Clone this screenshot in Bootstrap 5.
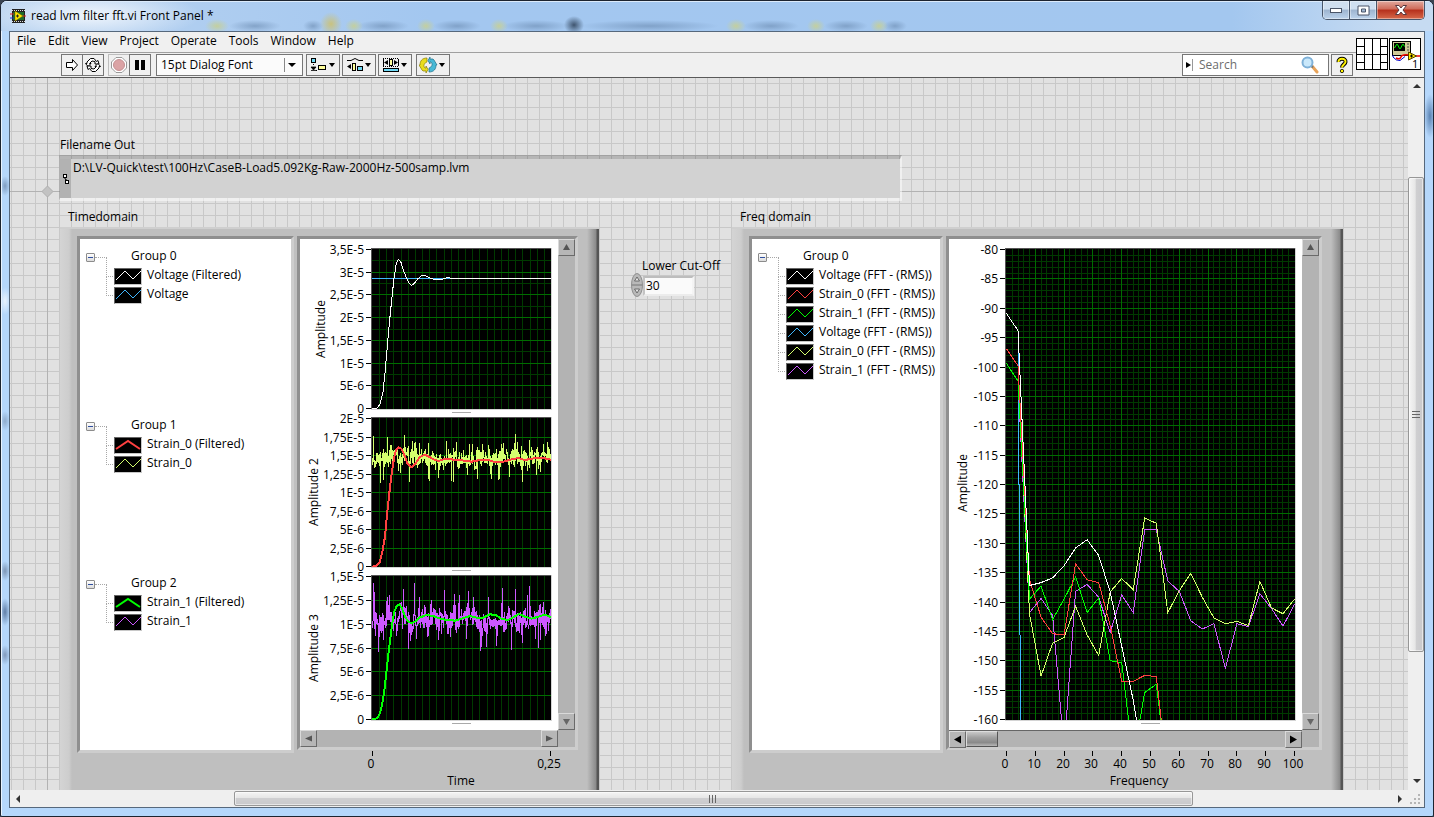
<!DOCTYPE html>
<html lang="en">
<head>
<meta charset="utf-8">
<meta name="viewport" content="width=device-width, initial-scale=1">
<title>read lvm filter fft.vi Front Panel *</title>
<link href="https://cdn.jsdelivr.net/npm/bootstrap@5.3.0/dist/css/bootstrap.min.css" rel="stylesheet">
<style>
  body { font: 12px/14px "Open Sans", "Noto Sans", sans-serif; color: #000; background: #3a4452; overflow: hidden; }
  button, input, select { font: inherit; color: inherit; }
  .frame { border: 1px solid #1c2430; border-radius: 7px 7px 2px 2px; padding: 0 8px 8px; overflow: hidden;
    background:
      radial-gradient(5px 10px at 4px 185px, #7f9cc0, transparent), radial-gradient(6px 14px at 4px 300px, #e8f2fc, transparent),
      radial-gradient(5px 10px at 4px 420px, #8fabcc, transparent), radial-gradient(5px 10px at 4px 570px, #7d95b5, transparent),
      radial-gradient(5px 14px at 4px 611px, #607ea6, transparent), radial-gradient(5px 10px at 4px 654px, #8199bb, transparent),
      radial-gradient(6px 22px at right 3px top 115px, #5b84b4, transparent),
      #b5d7fb;
    box-shadow: inset 1px 1px 0 #eaf4ff; }
  .titlebar { height: 30px; margin: 0 -8px; padding-left: 9px;
    background:
      radial-gradient(110px 26px at 90px 14px, #f4f8fdee, #f4f8fd00),
      radial-gradient(12px 7px at 216px 25px, #c3cf9e, transparent), radial-gradient(26px 6px at 254px 25px, #6f8fb5aa, transparent),
      radial-gradient(10px 6px at 312px 25px, #6f8fb5aa, transparent), radial-gradient(11px 12px at 330px 23px, #c9c27f, transparent),
      radial-gradient(9px 7px at 353px 25px, #c3cf9e, transparent), radial-gradient(26px 6px at 382px 25px, #6f8fb5aa, transparent),
      radial-gradient(9px 7px at 425px 25px, #c3cf9e, transparent), radial-gradient(24px 6px at 456px 25px, #6f8fb5aa, transparent),
      radial-gradient(9px 7px at 498px 25px, #c3cf9e, transparent), radial-gradient(34px 6px at 535px 25px, #6f8fb5aa, transparent),
      radial-gradient(10px 9px at 573px 24px, #26384ecc, transparent), radial-gradient(70px 6px at 648px 25px, #6f8fb5aa, transparent),
      radial-gradient(10px 7px at 735px 25px, #c3cf9e, transparent), radial-gradient(28px 6px at 770px 25px, #6f8fb5aa, transparent),
      radial-gradient(9px 7px at 815px 25px, #c3cf9e, transparent), radial-gradient(22px 6px at 845px 25px, #6f8fb5aa, transparent),
      radial-gradient(9px 7px at 878px 25px, #c3cf9e, transparent), radial-gradient(12px 6px at 894px 25px, #6f8fb5aa, transparent),
      linear-gradient(to right, #b9d3f0, #a3c7f0 30%, #a3c7ef 86%, #c6dbf2 97%);
    box-shadow: inset 0 1px 0 #dcebfb; }
  .winbtns { margin-right: 8px; height: 19px; border: 1px solid #48566a; border-top: 0; border-radius: 0 0 5px 5px; overflow: hidden; }
  .winbtns button { border: 0; border-right: 1px solid #48566a; padding: 0; width: 27px; box-shadow: inset 0 0 0 1px #ffffff66;
    background: linear-gradient(#cfdff0 0 45%, #9db4cf 50%, #bcd3ec); display: flex; align-items: center; justify-content: center; }
  .winbtns button:last-child { width: 47px; border-right: 0; background: linear-gradient(#e2a99e 0, #cf6b59 45%, #b62f1b 50%, #d6694a); }
  .client { border: 1px solid #56687c; background: #f0f0f0; flex: 1 1 0; min-height: 0; }
  .headbars { border-bottom: 1px solid #5a5a5a; }
  .menus { height: 21px; border-bottom: 1px solid #a0a0a0; padding-left: 7px; gap: 12px; }
  .menus a { color: #000; text-decoration: none; line-height: 18px; }
  .tools { height: 24px; padding: 0 3px 1px 51px; }
  .tbtn { height: 22px; border: 1px solid #767676; background: #f0f0f0; padding: 0; display: flex; align-items: center; justify-content: center; }
  .w-one { width: 22px; } .w-two { width: 34px; } .join { margin-left: -1px; }
  .fontbox { width: 147px; height: 22px; border: 1px solid #767676; appearance: none; padding: 0 20px 0 4px; line-height: 18px; border-radius: 0;
    margin: 0 3px 0 5px;
    background: #fbfbfb url("data:image/svg+xml,%3Csvg xmlns='http://www.w3.org/2000/svg' width='19' height='20'%3E%3Cpath d='M1.5 3v14' stroke='%23888'/%3E%3Cpath d='M5 8h8l-4 4z'/%3E%3C/svg%3E") no-repeat right center; }
  .setops { gap: 2px; } .setops .tbtn:last-child { margin-left: 2px; }
  .finder { width: 147px; height: 22px; border: 1px solid #767676; background: #fff; margin-right: 2px; }
  .finder input { border: 0; outline: 0; width: 108px; padding: 0 0 0 6px; background: none; }
  .finder input::placeholder { color: #6d6d6d; opacity: 1; }
  .corner { padding: 6px 3px 0 0; gap: 1px; }
  .canvas { overflow: hidden; padding: 60px 0 0 50px; position: relative; background-color: #e1e1e1;
    background-image:
      linear-gradient(#b2b2b2, #b2b2b2), linear-gradient(#b2b2b2, #b2b2b2),
      linear-gradient(to right, #c8c8c8 1px, transparent 1px), linear-gradient(#c8c8c8 1px, transparent 1px);
    background-size: 1px 100%, 100% 1px, 12px 12px, 12px 12px;
    background-position: 37px 0, 0 113px, 1px 0, 0 5px;
    background-repeat: no-repeat, no-repeat, repeat, repeat; }
  .origin { position: absolute; left: 32px; top: 108px; }
  .caption { margin-bottom: 3px; }
  .pathbox { width: 843px; height: 46px; margin-left: -1px; border: 3px solid; border-width: 4px 2px 3px 1px;
    border-color: #00000030 #ffffff80 #ffffff80 #00000020; background-clip: padding-box; background-color: #d2d2d2; }
  .pathbox input { border: 0; outline: 0; background: none; padding: 0 0 0 2px; height: 17px; }
  .pathgrip { width: 11px; background: #b2b2b2; padding-left: 3px; }
  .instr { height: 620px; padding: 9px 21px 0 17px; position: relative;
    background: linear-gradient(to right, #d4d4d4 0, #cdcdcd 9px, #bfbfbf 12px, #bfbfbf calc(100% - 12px), #8a8a8a calc(100% - 3px), #555 calc(100% - 2px), #555);
    box-shadow: inset 0 2px 0 #cfcfcf; gap: 3px; }
  .instr-time { width: 539px; } .instr-freq { width: 611px; }
  .well { border: 3px solid; border-color: #8f8f8f #cdcdcd #cdcdcd #8f8f8f; }
  .keys { background: #fff; height: 517px; padding: 8px 0 0 6px; }
  .instr-time .keys { width: 217px; } .instr-freq .keys { width: 194px; }
  .keys ul { margin: 0; padding: 0; list-style: none; }
  .keygroup { height: 158px; } .keygroup:first-child { height: 169px; }
  .keyhead { height: 19px; }
  .keyhead span, .keys li span { line-height: 14px; margin-top: -1px; }
  .fold { width: 9px; height: 9px; border: 1px solid #8c8c8c; border-radius: 1px; padding: 0; background: linear-gradient(#fff, #dcdcdc); display: flex; align-items: center; justify-content: center; margin-top: 2px; }
  .keyhead i { width: 12px; border-top: 1px dotted #a8a8a8; margin-top: 2px; }
  .keyhead span { margin-left: 24px; }
  .keys li { height: 19px; margin-left: 20px; padding-left: 8px; position: relative; gap: 5px; }
  .keys li::before { content: ""; position: absolute; left: 0; top: -8px; width: 7px; height: 19px; border: dotted #a8a8a8; border-width: 0 0 1px 1px; }
  .keys li svg { background: #000; border: 1px solid #c8c8c8; border-top-color: #666; border-left-color: #666; margin-top: 2px; }
  .sheet { background: #b3b3b3; height: 514px; display: grid; grid-template: 491px 17px / 1fr 17px; }
  .sheet > svg { background: #fff; display: block; }
  .sheet-time { width: 281px; } .sheet-freq { width: 376px; }
  .hgroove { border-top: 1px solid #666; }
  .sbtn { width: 17px; height: 17px; padding: 0; border: 1px solid; border-color: #dadada #6a6a6a #6a6a6a #dadada; background: #b6b6b6; display: flex; align-items: center; justify-content: center; }
  .sthumb { width: 32px; border: 1px solid; border-color: #ddd #555 #555 #ddd; background: linear-gradient(#c8c8c8, #a0a0a0 40%, #8a8a8a 75%, #b8b8b8); }
  .axis-x { display: block; }
  svg text { font: 12px "Open Sans", "Noto Sans", sans-serif; }
  .cutoff { width: 133px; padding: 49px 0 0 32px; }
  .cutoff label { margin-left: 11px; white-space: nowrap; }
  .cutoff input { width: 51px; height: 20px; border: 2px solid; border-color: #bdbdbd #f4f4f4 #ececec #c4c4c4; background: #fafafa; padding: 0 0 0 1px; outline: 0; margin-top: 1px; }
  .vbar { width: 16px; background: #efefef; } .hbar { height: 17px; background: #efefef; }
  .endcap { width: 17px; height: 17px; border: 0; padding: 0; background: none; display: flex; align-items: center; justify-content: center; flex: none; }
  .thumb { border: 1px solid #979797; border-radius: 2px; display: flex; align-items: center; justify-content: center; box-shadow: inset 0 0 0 1px #fff8; }
  .hbar .thumb { flex: 958 1 0; height: 15px; margin-top: 1px; background: linear-gradient(#f5f5f5, #e6e6e6 45%, #cfcfd1 50%, #c9c9cc); }
  .vbar .thumb { flex: 475 1 0; background: linear-gradient(to right, #f5f5f5, #e6e6e6 45%, #cfcfd1 50%, #c9c9cc); }
  .h-pre { flex: 207 1 0; } .h-post { flex: 198 1 0; } .v-pre { flex: 82 1 0; } .v-post { flex: 122 1 0; }
</style>
</head>
<body>
<div class="frame vh-100 d-flex flex-column">
  <header class="titlebar d-flex flex-shrink-0">
    <div class="d-flex align-items-center flex-grow-1" style="gap:5px">
      <svg width="16" height="16" viewBox="0 0 16 16"><rect x="2" y="1" width="13" height="14" fill="#222"/><path d="M2 2.500h13M2 13.500h13" stroke="#ddd" stroke-dasharray="1 1"/><rect x="3" y="4" width="11" height="8" fill="#1d6b2c"/><path d="M5 3l8 5-8 5z" fill="#ffe600" stroke="#7a6a00" stroke-width=".5"/><path d="M6 8h3M7.500 6.500v3" stroke="#222"/><path d="M0 6h4M13 8h3" stroke="#d22"/><path d="M0 10h4" stroke="#23c"/></svg>
      <span>read lvm filter fft.vi Front Panel *</span>
    </div>
    <div class="winbtns d-flex">
      <button aria-label="Minimize"><svg width="14" height="8" viewBox="0 0 14 8"><rect x="1.500" y="2.500" width="11" height="4" fill="#fff" stroke="#4a5568"/></svg></button>
      <button aria-label="Maximize"><svg width="13" height="11" viewBox="0 0 13 11"><path d="M1 1h11v9H1zM4.500 4v3h4V4z" fill="#fff" fill-rule="evenodd" stroke="#4a5568"/></svg></button>
      <button aria-label="Close"><svg width="14" height="12" viewBox="0 0 14 12"><path d="M1.500 1.500h3.500l2 2.500 2-2.500h3.500L9 6l3.500 4.500H9L7 8l-2 2.500H1.500L5 6z" fill="#fff" stroke="#5a3a40"/></svg></button>
    </div>
  </header>

  <main class="client d-flex flex-column">
    <div class="headbars d-flex flex-shrink-0">
      <div class="flex-grow-1">
        <nav class="menus d-flex">
          <a href="#">File</a><a href="#">Edit</a><a href="#">View</a><a href="#">Project</a><a href="#">Operate</a><a href="#">Tools</a><a href="#">Window</a><a href="#">Help</a>
        </nav>
        <div class="tools d-flex align-items-center">
          <button class="tbtn w-one" aria-label="Run"><svg width="16" height="16" viewBox="0 0 16 16"><path d="M2.500 5.500h6v-3l5 5.500-5 5.500v-3h-6z" fill="#fff" stroke="#000"/></svg></button>
          <button class="tbtn w-one join" aria-label="Run continuously"><svg width="18" height="16" viewBox="0 0 18 16" fill="#fff" stroke="#000"><path d="M1.500 6.500L4 9.500l3-3H5.500L8 4l3 .5V7h4L14 3.500l-1.500 1L10 1.500H6.500L3 5v1.500z"/><path d="M16.500 9.500L14 6.500l-3 3h1.500L10 12l-3-.5V9H3l1 3.500 1.500-1L8 14.500h3.500L15 11V9.500z"/></svg></button>
          <button class="tbtn w-one ms-1" style="border-color:#bdbdbd" aria-label="Abort"><svg width="16" height="16" viewBox="0 0 16 16"><path d="M5 .5h6L15.500 5v6L11 15.500H5L.5 11V5z" fill="#fff" stroke="#999"/><circle cx="8" cy="8" r="5.500" fill="#dba3a5" stroke="#c49092"/></svg></button>
          <button class="tbtn w-one join" aria-label="Pause"><svg width="12" height="12" viewBox="0 0 12 12"><path d="M1 1h4v10H1zM7 1h4v10H7z"/></svg></button>
          <select class="fontbox" aria-label="Text settings"><option>15pt Dialog Font</option></select>
          <div class="setops d-flex">
            <button class="tbtn w-two" aria-label="Align objects"><svg width="28" height="16" viewBox="0 0 28 16"><rect x="2.500" y="1.500" width="4" height="4" fill="#6fd9f5" stroke="#000"/><path d="M4.500 7v2M7 13.500h2" stroke="#000" stroke-dasharray="1 1"/><path d="M2 10h5l-2.500 3zM2 13.500h5" stroke="#000" stroke-width=".8"/><rect x="9.500" y="8.500" width="7" height="4" fill="#ffff9c" stroke="#000"/><path d="M20 6h6l-3 4z"/></svg></button>
            <button class="tbtn w-two" aria-label="Distribute objects"><svg width="28" height="16" viewBox="0 0 28 16"><path d="M2 3.500h4l4-2 4 2h4" stroke="#000" fill="none"/><path d="M2 9.500l4-2.500v5z"/><rect x="7.500" y="6.500" width="3" height="7" fill="#ffff9c" stroke="#000"/><rect x="12.500" y="9.500" width="5" height="4" fill="#6fd9f5" stroke="#000"/><path d="M20 6h6l-3 4z"/></svg></button>
            <button class="tbtn w-two" aria-label="Resize objects"><svg width="28" height="16" viewBox="0 0 28 16"><path d="M2 1.500h16M2 9.500h16" stroke="#000" stroke-dasharray="1 1"/><path d="M2.500 2v7M17.500 2v7" stroke="#000"/><path d="M3 5.500l4-2.500v5zM17 5.500L13 3v5z"/><rect x="8.500" y="2.500" width="3" height="6" fill="#ffff9c" stroke="#000"/><rect x="2.500" y="11.500" width="15" height="3" fill="#6fd9f5" stroke="#000"/><path d="M20 6h6l-3 4z"/></svg></button>
            <button class="tbtn w-two" aria-label="Reorder"><svg width="28" height="16" viewBox="0 0 28 16"><path d="M8 1C3 1 1 4 1 8l-1 0 3 5 1 1h3v2l2-3.500L7 9v2H6C4 9 5 6 8 5z" fill="#e8dc1c" stroke="#8a7d00" stroke-width=".7"/><path d="M10 15c5 0 7-3 7-7h1l-3-5-1-1h-3V0L9 3.500 11 7V5h1c2 2 1 5-2 6z" fill="#48b9d6" stroke="#1e6f88" stroke-width=".7"/><path d="M20 6h6l-3 4z"/></svg></button>
          </div>
          <div class="finder d-flex align-items-center ms-auto">
            <svg width="10" height="20" viewBox="0 0 10 20"><path d="M3 7l5 3-5 3z"/><path d="M9.500 4v12" stroke="#999"/></svg>
            <input type="text" placeholder="Search" aria-label="Search">
            <svg width="18" height="18" viewBox="0 0 18 18"><path d="M11 10l5 6" stroke="#e9a45a" stroke-width="3" stroke-linecap="round"/><path d="M10 9.500l2 2" stroke="#777" stroke-width="2"/><circle cx="6.500" cy="6.500" r="5" fill="#c9e8fb" stroke="#7fb1d8" stroke-width="2"/></svg>
          </div>
          <button class="tbtn w-one" aria-label="Help"><svg width="14" height="18" viewBox="0 0 14 18" fill="none"><path d="M3.500 6C3 1.500 11 1.500 10.500 6 10.200 8.500 7 8.500 7 11.500" stroke="#000" stroke-width="4"/><path d="M3.500 6C3 1.500 11 1.500 10.500 6 10.200 8.500 7 8.500 7 11.500" stroke="#fff200" stroke-width="2"/><circle cx="7" cy="15" r="1.700" fill="#fff200" stroke="#000" stroke-width=".8"/></svg></button>
        </div>
      </div>
      <div class="corner d-flex">
        <svg width="32" height="32" viewBox="0 0 32 32"><rect x=".5" y=".5" width="31" height="31" fill="#fff" stroke="#000"/><path d="M8.500 0v32M16.500 0v32M24.500 0v32M0 16.500h32M0 8.500h8M0 24.500h8M24 8.500h8M24 24.500h8" stroke="#000"/></svg>
        <svg width="32" height="32" viewBox="0 0 32 32"><rect x=".5" y=".5" width="31" height="31" fill="#fff" stroke="#000"/><rect x="3.500" y="3.500" width="18" height="14" fill="#cfc99a" stroke="#000"/><rect x="5" y="5" width="11" height="8" fill="#000"/><path d="M5.500 10l2-3.500h1l2 4h1l2-4h1l1 2" stroke="#0f0" fill="none"/><path d="M18 6h2M18 9h2M18 12h2" stroke="#444"/><path d="M4 17v2q3 4 7 3.500l5-4" stroke="#00c" fill="none"/><path d="M7 20q4 2 5-1t8-2M27 18h4" stroke="#e00" fill="none" stroke-width="1.500"/><path d="M19.500 14l8 4-8 4z" fill="#ffe800" stroke="#554400"/><path d="M21 18h3M22.500 16.500v3" stroke="#000"/><text x="23" y="30" style="font-size:11px">1</text></svg>
      </div>
    </div>

    <div class="d-flex flex-grow-1" style="min-height:0">
      <section class="canvas flex-grow-1">
        <svg class="origin" width="11" height="11" viewBox="0 0 11 11"><path d="M5.500 0l5.500 5.500-5.500 5.500L0 5.500z" fill="#c2c2c2" stroke="#adadad"/></svg>
        <label for="fileout" class="caption d-block">Filename Out</label>
        <div class="pathbox d-flex align-items-start">
          <div class="pathgrip align-self-stretch d-flex align-items-center"><svg width="7" height="10" viewBox="0 0 7 10"><path d="M2 2v3l3 2" stroke="#000" fill="none"/><rect x=".5" y=".5" width="3" height="3" fill="#fff" stroke="#000"/><rect x="2.500" y="6.500" width="3" height="3" fill="#fff" stroke="#000"/></svg></div>
          <input id="fileout" class="flex-grow-1" type="text" readonly value="D:\LV-Quick\test\100Hz\CaseB-Load5.092Kg-Raw-2000Hz-500samp.lvm">
        </div>
        <div class="d-flex align-items-start" style="margin-top:9px">
          <div>
            <div class="caption ps-2">Timedomain</div>
            <div class="instr instr-time d-flex align-items-start">
              <div class="well keys" id="keysTime"></div>
              <div>
                <div class="well sheet sheet-time">
                  <svg id="chartTime" width="258" height="491" viewBox="0 0 258 491"></svg>
                  <div class="d-flex flex-column justify-content-between">
                    <button class="sbtn" aria-label="Scroll plots up"><svg width="9" height="9"><path d="M4.500 1l3.500 6H1z" fill="#555"/></svg></button>
                    <button class="sbtn" aria-label="Scroll plots down"><svg width="9" height="9"><path d="M4.500 8L8 2H1z" fill="#666"/></svg></button>
                  </div>
                  <div class="d-flex justify-content-between">
                    <button class="sbtn" aria-label="Scroll time back"><svg width="9" height="9"><path d="M1 4.500l7-3v6z" fill="#555"/></svg></button>
                    <button class="sbtn" aria-label="Scroll time forward"><svg width="9" height="9"><path d="M8 4.500l-7-3v6z" fill="#555"/></svg></button>
                  </div>
                </div>
                <svg class="axis-x" id="axisTime" width="281" height="40"></svg>
              </div>
            </div>
          </div>
          <div class="cutoff">
            <label for="cut">Lower Cut-Off</label>
            <div class="d-flex align-items-center">
              <svg width="12" height="24" viewBox="0 0 12 24"><ellipse cx="6" cy="12" rx="5.500" ry="11.500" fill="#b9b9b9" stroke="#8f8f8f"/><path d="M1 12h10" stroke="#777"/><path d="M6 4l2.500 4h-5zM6 20l2.500-4h-5z" fill="#e3e3e3" stroke="#555" stroke-width=".8"/></svg>
              <input id="cut" type="text" value="30">
            </div>
          </div>
          <div>
            <div class="caption ps-2">Freq domain</div>
            <div class="instr instr-freq d-flex align-items-start">
              <div class="well keys" id="keysFreq"></div>
              <div>
                <div class="well sheet sheet-freq">
                  <svg id="chartFreq" width="353" height="491" viewBox="0 0 353 491"></svg>
                  <div class="d-flex flex-column justify-content-between">
                    <button class="sbtn" aria-label="Scroll plots up"><svg width="9" height="9"><path d="M4.500 1l3.500 6H1z" fill="#555"/></svg></button>
                    <button class="sbtn" aria-label="Scroll plots down"><svg width="9" height="9"><path d="M4.500 8L8 2H1z" fill="#666"/></svg></button>
                  </div>
                  <div class="hgroove d-flex">
                    <button class="sbtn" aria-label="Scroll frequency back"><svg width="9" height="9"><path d="M1 4.500l7-4v8z"/></svg></button>
                    <div class="sthumb"></div>
                    <button class="sbtn ms-auto" aria-label="Scroll frequency forward"><svg width="9" height="9"><path d="M8 4.500l-7-4v8z"/></svg></button>
                  </div>
                </div>
                <svg class="axis-x" id="axisFreq" width="376" height="40"></svg>
              </div>
            </div>
          </div>
        </div>
      </section>
      <div class="vbar d-flex flex-column flex-shrink-0">
        <button class="endcap" aria-label="Scroll up"><svg width="8" height="5"><path d="M4 0l4 4H0z" fill="#333"/></svg></button>
        <div class="v-pre"></div>
        <div class="thumb"><svg width="8" height="8"><path d="M0 1.500h8M0 4.500h8M0 7.500h8" stroke="#666"/></svg></div>
        <div class="v-post"></div>
        <button class="endcap" aria-label="Scroll down"><svg width="8" height="5"><path d="M4 4l4-4H0z" fill="#333"/></svg></button>
      </div>
    </div>
    <div class="hbar d-flex flex-shrink-0">
      <button class="endcap" aria-label="Scroll left"><svg width="5" height="8"><path d="M0 4l4-4v8z" fill="#333"/></svg></button>
      <div class="h-pre"></div>
      <div class="thumb"><svg width="8" height="8"><path d="M.5 0v8M3.500 0v8M6.500 0v8" stroke="#666"/></svg></div>
      <div class="h-post"></div>
      <button class="endcap" aria-label="Scroll right"><svg width="5" height="8"><path d="M5 4L1 0v8z" fill="#333"/></svg></button>
      <svg width="16" height="17" viewBox="0 0 16 17"><path d="M10 4h2v2h-2zM6 8h2v2H6zM10 8h2v2h-2zM2 12h2v2H2zM6 12h2v2H6zM10 12h2v2h-2z" fill="#b5b5b5"/></svg>
    </div>
  </main>
</div>

<script src="https://cdn.jsdelivr.net/npm/bootstrap@5.3.0/dist/js/bootstrap.bundle.min.js"></script>
<script>
const WHITE = '#ffffff', RED = '#ff4040', GREEN = '#00ff00', BLUE = '#40b8ff', LIME = '#d4ff6e', VIOLET = '#cc58ff';

/* ---- plot legends ---- */
function legend(id, groups) {
  document.getElementById(id).innerHTML = groups.map(([name, items]) =>
    `<div class="keygroup"><div class="keyhead d-flex align-items-center"><button class="fold" aria-label="Collapse ${name}"><svg width="5" height="1"><path d="M0 .5h5" stroke="#3050a0"/></svg></button><i></i><span>${name}</span></div><ul>` +
    items.map(([label, color, bold]) =>
      `<li class="d-flex align-items-center"><svg width="28" height="17" viewBox="0 0 26 15"><path d="${bold ? 'M1 11L13 3l12 8' : 'M1 11l9-9 8 8 8-8'}" fill="none" stroke="${color}" stroke-width="${bold ? 2 : 1}"/></svg><span>${label}</span></li>`).join('') +
    '</ul></div>').join('');
}
legend('keysTime', [
  ['Group 0', [['Voltage (Filtered)', WHITE], ['Voltage', BLUE]]],
  ['Group 1', [['Strain_0 (Filtered)', RED, 1], ['Strain_0', LIME]]],
  ['Group 2', [['Strain_1 (Filtered)', GREEN, 1], ['Strain_1', VIOLET]]]]);
legend('keysFreq', [
  ['Group 0', [['Voltage (FFT - (RMS))', WHITE], ['Strain_0 (FFT - (RMS))', RED], ['Strain_1 (FFT - (RMS))', GREEN],
               ['Voltage (FFT - (RMS))', BLUE], ['Strain_0 (FFT - (RMS))', LIME], ['Strain_1 (FFT - (RMS))', VIOLET]]]]);

/* ---- shared drawing helpers ---- */
function plotArea(x, y, w, h, xDiv, xMajorEvery, yDiv, yMajorEvery, xStep) {
  let minor = '', major = '';
  for (let i = 1; i < xDiv; i++) {
    const d = `M${x + Math.round(i * (xStep || w / xDiv))}.5 ${y}v${h}`;
    if (i % xMajorEvery) minor += d; else major += d;
  }
  for (let i = 1; i < yDiv; i++) {
    const d = `M${x} ${y + Math.round(i * (h - 1) / yDiv)}.5h${w}`;
    if (i % yMajorEvery) minor += d; else major += d;
  }
  return `<rect x="${x - 1}" y="${y - 1}" width="${w + 2}" height="${h + 2}" fill="#d4d4d4"/>
    <rect x="${x - 1}" y="${y - 1}" width="${w + 1}" height="${h + 1}" fill="#555"/>
    <rect x="${x}" y="${y}" width="${w}" height="${h}" fill="#000"/>
    <path d="${minor}" stroke="#003a00"/><path d="${major}" stroke="#006c00"/>
    <path d="M${x + Math.round(w / 2) - 10} ${y + h + 3}.5h19" stroke="#aaa"/>`;
}
function yLabels(x, y, h, labels) {
  return labels.map((t, i) => {
    const c = y + Math.round(i * (h - 1) / (labels.length - 1));
    return `<text x="${x - 8}" y="${c + 5}" text-anchor="end">${t}</text><path d="M${x - 6} ${c}.5h5" stroke="#000"/>`;
  }).join('');
}
const upright = (x, y, t) => `<text transform="translate(${x} ${y}) rotate(-90)" text-anchor="middle">${t}</text>`;
const line = (pts, color, width = 1) =>
  `<polyline points="${pts}" fill="none" stroke="${color}" stroke-width="${width}" vector-effect="non-scaling-stroke" shape-rendering="crispEdges"/>`;

/* Random signal around a mean, with its strongest spikes listed as x:y. */
function noise(seed, mean, spread, spikes) {
  const rnd = () => (seed = (seed * 16807) % 2147483647) / 2147483647;
  const pts = [];
  let drift = 0;
  for (let i = 0; i < 500; i++) {
    let g = -3;
    for (let k = 0; k < 6; k++) g += rnd();
    drift = drift * 0.75 + (rnd() - 0.5) * spread * 0.5;
    pts.push([231 + i * 537 / 499, mean + drift + g * spread * 0.55]);
  }
  spikes.forEach(([x, y]) => { pts[Math.round((x - 231) * 499 / 537)][1] = y; });
  return pts.map(p => p[0].toFixed(1) + ',' + p[1].toFixed(1)).join(' ');
}

/* ---- time domain: traces are stored at three units per pixel ---- */
const T = document.getElementById('chartTime');
const trace = (y, h, y0, body) =>
  `<svg x="72" y="${y}" width="179" height="${h}" viewBox="231 ${y0} 537 ${h * 3}" preserveAspectRatio="none">${body}</svg>`;
T.innerHTML =
  plotArea(72, 10, 179, 160, 25, 99, 14, 2) +
  yLabels(72, 10, 160, ['3,5E-5', '3E-5', '2,5E-5', '2E-5', '1,5E-5', '1E-5', '5E-6', '0']) + upright(25, 90, 'Amplitude') +
  trace(10, 160, 57, line('231,146 768,146', BLUE) +
    line('231,535 248,534 256,520 264,485 270,430 276,360 283,280 290,210 297,145 303,105 308,91 312,89 318,97 325,120 335,145 342,160 350,166 358,160 368,147 380,137 390,136 400,141 410,146 425,149 440,148 455,143 465,144 475,146 768,146', WHITE)) +
  plotArea(72, 179, 179, 149, 25, 99, 8, 1) +
  yLabels(72, 179, 149, ['2E-5', '1,75E-5', '1,5E-5', '1,25E-5', '1E-5', '7,5E-6', '5E-6', '2,5E-6', '0']) + upright(18, 253, 'Amplitude 2') +
  trace(179, 149, 39,
    line(noise(4711, 160, 36, [[235, 93], [239, 190], [256, 233], [266, 225], [277, 97], [328, 90], [343, 230], [360, 110], [374, 114], [400, 113], [402, 228], [430, 218], [455, 107], [469, 228], [475, 230], [484, 110], [532, 118], [547, 222], [582, 120], [588, 222], [612, 225], [619, 117], [625, 113], [643, 215], [660, 87], [667, 110], [682, 230], [703, 106], [725, 210], [747, 117], [757, 112]]), LIME) +
    line('231,485 245,482 255,470 263,435 270,395 276,330 284,255 290,205 297,160 303,135 311,127 319,131 328,150 337,174 349,187 360,178 375,156 388,149 400,154 415,163 430,168 445,163 460,161 475,164 500,166 530,170 560,164 580,165 595,170 625,170 650,163 670,159 690,165 710,161 740,158 768,164', RED, 2)) +
  plotArea(72, 337, 179, 144, 25, 99, 6, 1) +
  yLabels(72, 337, 144, ['1,5E-5', '1,25E-5', '1E-5', '7,5E-6', '5E-6', '2,5E-6', '0']) + upright(18, 409, 'Amplitude 3') +
  trace(337, 144, 18,
    line(noise(90210, 150, 46, [[235, 40], [238, 65], [250, 245], [265, 210], [276, 80], [283, 75], [325, 57], [341, 237], [346, 212], [358, 40], [373, 82], [409, 90], [430, 210], [448, 60], [466, 200], [480, 72], [493, 75], [514, 207], [520, 62], [535, 80], [556, 242], [560, 232], [575, 230], [580, 80], [605, 228], [622, 55], [650, 240], [661, 57], [683, 220], [697, 75], [705, 47], [721, 208], [730, 235], [736, 210], [745, 95]]), VIOLET) +
    line('231,448 246,445 255,430 262,400 269,355 276,290 284,220 291,165 298,125 305,108 313,104 320,112 330,140 340,155 350,160 362,153 375,142 395,135 415,138 430,144 450,149 480,152 500,146 525,138 545,143 565,143 585,133 602,135 620,147 640,150 655,142 672,132 690,140 710,146 730,140 748,134 768,141', GREEN, 2));
document.getElementById('axisTime').innerHTML =
  [['0', 75], ['0,25', 253]].map(([t, x]) => `<path d="M${x}.5 1v5" stroke="#000"/><text x="${x - 1}" y="18" text-anchor="middle">${t}</text>`).join('') +
  '<text x="164" y="35" text-anchor="middle">Time</text>';

/* ---- frequency domain: level in dB, one value every 4 Hz ---- */
const spectra = [
  [VIOLET, [-99.4, -102.4, -141.8, -139.4, -142.3, -165.2, -138.2, -137, -139.2, -145.2, -138.8, -141.8, -127.7, -127.7, -136.4, -138.2, -143.2, -144.6, -143.7, -151.3, -143.7, -144.2, -138.6, -141.1, -144.1, -140.4]],
  [LIME, [-96.9, -99.8, -142, -152.6, -147, -146, -140.7, -145.6, -149.1, -138.3, -136, -137.9, -125.7, -126.6, -141.8, -138.1, -135.1, -139.2, -142.7, -143.7, -143.3, -144, -136.5, -141, -142, -139.5]],
  [BLUE, [-90.9, -93.8, -390]],
  [GREEN, [-99.4, -102.4, -139.5, -137.3, -143, -139.5, -135.7, -141.8, -139.3, -150, -150.3, -166.6, -155.4, -154, -170]],
  [RED, [-96.9, -99.8, -136.2, -142.6, -145.4, -145.6, -133.5, -136.2, -136.7, -144, -153.5, -153.5, -152.5, -152.7, -169.7]],
  [WHITE, [-90.9, -93.8, -137.2, -136.7, -135.9, -133.8, -130.8, -129.4, -132.1, -138.3, -147.5, -156.7, -168.6]]
];
const dB = []; for (let v = -80; v >= -160; v -= 5) dB.push(v);
document.getElementById('chartFreq').innerHTML =
  plotArea(57, 10, 289, 471, 50, 5, 80, 5, 5.76) + yLabels(57, 10, 471, dB) + upright(18, 244, 'Amplitude') +
  '<svg x="57" y="10" width="289" height="471">' +
  spectra.map(([c, v]) => line(v.map((d, i) => (i * 11.52 + .5).toFixed(1) + ',' + ((-80 - d) * 5.875 + .5).toFixed(1)).join(' '), c)).join('') + '</svg>';
let ax = '<text x="193" y="35" text-anchor="middle">Frequency</text>';
for (let i = 0; i <= 10; i++) {
  const x = 60 + Math.round(i * 28.8);
  ax += `<path d="M${x}.5 1v5" stroke="#000"/><text x="${x - 1}" y="18" text-anchor="middle">${i * 10}</text>`;
}
document.getElementById('axisFreq').innerHTML = ax;
</script>
</body>
</html>
